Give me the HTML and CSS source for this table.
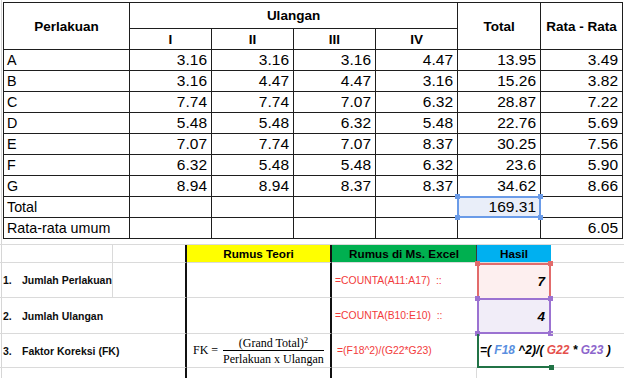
FILE: index.html
```html
<!DOCTYPE html>
<html>
<head>
<meta charset="utf-8">
<link rel="stylesheet" href="styles.css">
</head>
<body>
<div class="top">
  <table class="data">
    <colgroup>
      <col class="c-lbl"><col class="c-num"><col class="c-num"><col class="c-num"><col class="c-num"><col class="c-tot"><col class="c-num">
    </colgroup>
    <thead>
      <tr class="h1"><th rowspan="2">Perlakuan</th><th colspan="4">Ulangan</th><th rowspan="2">Total</th><th rowspan="2">Rata - Rata</th></tr>
      <tr class="h2"><th>I</th><th>II</th><th>III</th><th>IV</th></tr>
    </thead>
    <tbody>
      <tr><td class="lbl">A</td><td>3.16</td><td>3.16</td><td>3.16</td><td>4.47</td><td>13.95</td><td>3.49</td></tr>
      <tr><td class="lbl">B</td><td>3.16</td><td>4.47</td><td>4.47</td><td>3.16</td><td>15.26</td><td>3.82</td></tr>
      <tr><td class="lbl">C</td><td>7.74</td><td>7.74</td><td>7.07</td><td>6.32</td><td>28.87</td><td>7.22</td></tr>
      <tr><td class="lbl">D</td><td>5.48</td><td>5.48</td><td>6.32</td><td>5.48</td><td>22.76</td><td>5.69</td></tr>
      <tr><td class="lbl">E</td><td>7.07</td><td>7.74</td><td>7.07</td><td>8.37</td><td>30.25</td><td>7.56</td></tr>
      <tr><td class="lbl">F</td><td>6.32</td><td>5.48</td><td>5.48</td><td>6.32</td><td>23.6</td><td>5.90</td></tr>
      <tr><td class="lbl">G</td><td>8.94</td><td>8.94</td><td>8.37</td><td>8.37</td><td>34.62</td><td>8.66</td></tr>
      <tr><td class="lbl">Total</td><td></td><td></td><td></td><td></td><td class="sel"><span class="selbox"></span><span class="hd tl"></span><span class="hd tr"></span><span class="hd bl"></span><span class="hd br"></span>169.31</td><td></td></tr>
      <tr><td class="lbl">Rata-rata umum</td><td></td><td></td><td></td><td></td><td></td><td>6.05</td></tr>
    </tbody>
  </table>
</div>

<div class="lower">
  <!-- header row -->
  <div class="cell"></div>
  <div class="cell thick"></div>
  <div class="cell thick hdr yellow">Rumus Teori</div>
  <div class="cell hdr green">Rumus di Ms. Excel</div>
  <div class="cell hdr blue">Hasil</div>
  <div class="cell last"></div>

  <!-- row 1 -->
  <div class="cell label"><span class="no">1.</span>Jumlah Perlakuan</div>
  <div class="cell thick"></div>
  <div class="cell thick"></div>
  <div class="cell excel">=COUNTA(A11:A17)  ::</div>
  <div class="cell res res-red"><span class="hd tl"></span><span class="hd tr"></span>7</div>
  <div class="cell last"></div>

  <!-- row 2 -->
  <div class="cell label span2 thick"><span class="no">2.</span>Jumlah Ulangan</div>
  <div class="cell thick"></div>
  <div class="cell excel">=COUNTA(B10:E10)  ::</div>
  <div class="cell res res-purple"><span class="hd tl"></span><span class="hd tr"></span><span class="hd bl"></span><span class="hd br"></span>4</div>
  <div class="cell last"></div>

  <!-- row 3 -->
  <div class="cell label span2 thick"><span class="no">3.</span>Faktor Koreksi (FK)</div>
  <div class="cell thick theory">
    <span class="fk">FK =</span>
    <span class="frac"><span class="numer">(Grand Total)<sup>2</sup></span><span class="denom">Perlakuan x Ulangan</span></span>
  </div>
  <div class="cell excel excel3">=(F18^2)/(G22*G23)</div>
  <div class="cell res res-green"><span class="hd br"></span><span class="ftext">=( <span class="r-blue">F18</span> ^2)/( <span class="r-red">G22</span> * <span class="r-purple">G23</span> )</span><span class="caret"></span></div>
  <div class="cell last open"></div>

  <!-- row 4 (partial) -->
  <div class="cell span2 thick"></div>
  <div class="cell thick"></div>
  <div class="cell"></div>
  <div class="cell res-tail"></div>
  <div class="cell last"></div>
</div>
</body>
</html>
```

FILE: styles.css
```css
* {
  box-sizing: border-box;
  margin: 0;
  padding: 0;
}

html, body {
  background: #fff;
}

body {
  width: 624px;
  height: 378px;
  overflow: hidden;
  font-family: "Liberation Sans", Arial, sans-serif;
  color: #000;
  background: linear-gradient(#d6d6d6, #d6d6d6) 1px 0 / 1px 100% no-repeat, #fff;
}

/* ---------- top table ---------- */
.top {
  padding: 2px 0 0 3px;
}

.data {
  border-collapse: collapse;
  table-layout: fixed;
  width: 619px;
}

.c-lbl { width: 126px; }
.c-num { width: 82px; }
.c-tot { width: 83px; }

.data th,
.data td {
  border: 1px solid #1e1e1e;
  height: 21px;
  padding: 0 4px 0 3px;
  font-size: 15.5px;
  white-space: nowrap;
  vertical-align: middle;
}

.data th {
  font-weight: bold;
  font-size: 13.5px;
  text-align: center;
  padding: 0;
}

.data .h1 th { height: 26px; }
.data .h2 th { height: 21px; }

.data td {
  text-align: right;
}

.data td.lbl {
  text-align: left;
  padding-left: 3px;
  font-size: 14.3px;
}

.data td.sel {
  position: relative;
  background: #e9eef9;
}

.selbox {
  position: absolute;
  left: -1px;
  top: -1px;
  right: -1px;
  bottom: -1px;
  border: 2px solid #6a9be8;
}

.hd {
  position: absolute;
  width: 5px;
  height: 5px;
  background: #6a9be8;
}

.sel .tl { left: -3px; top: -3px; }
.sel .tr { right: -3px; top: -3px; }
.sel .bl { left: -3px; bottom: -3px; }
.sel .br { right: -3px; bottom: -3px; }

/* ---------- lower grid ---------- */
.lower {
  margin-top: 5px;
  border-top: 1px solid #dadada;
  display: grid;
  grid-template-columns: 113px 74px 145px 145px 74px 1fr;
  grid-template-rows: 18px 35px 36px 34px 12px;
}

.cell {
  position: relative;
  display: flex;
  align-items: center;
  border-right: 1px solid #dadada;
  border-bottom: 1px solid #dadada;
  white-space: nowrap;
}

.cell.thick {
  border-right: 2px solid #111;
}

.cell.last {
  border-right: none;
}

.cell.span2 {
  grid-column: span 2;
}

.hdr {
  justify-content: center;
  font-weight: bold;
  font-size: 11.7px;
}

.yellow { background: #ffff00; }
.green  { background: #00b050; border-right: 1px solid #3a3a3a; }
.blue   { background: #00b0f0; border-right: none; }

.label {
  font-weight: bold;
  font-size: 10.5px;
  padding-left: 3px;
  color: #0d0d0d;
}

.label .no {
  display: inline-block;
  width: 19px;
}

.excel {
  color: #f23b3b;
  font-size: 10.4px;
  padding-left: 3px;
  white-space: pre;
  border-right: none;
}

.excel3 {
  padding-left: 5px;
}

.res {
  justify-content: flex-end;
  font-weight: bold;
  font-style: italic;
  font-size: 13.5px;
  padding-right: 4px;
}

.res-red {
  background: #fdefef;
  border: 2px solid #e26b6b;
  border-bottom: none;
}

.res-red .hd { background: #e26b6b; }
.res-red .tl { left: -4px; top: -4px; }
.res-red .tr { right: -4px; top: -4px; }

.res-purple {
  background: #f1edf8;
  border: 2px solid #9b72d1;
}

.res-purple .hd { background: #9b72d1; }
.res-purple .tl { left: -4px; top: -4px; }
.res-purple .tr { right: -4px; top: -4px; }
.res-purple .bl { left: -4px; bottom: -4px; }
.res-purple .br { right: -4px; bottom: -4px; }

.res-green {
  justify-content: flex-start;
  overflow: visible;
  border-right: none;
  border-left: 2px solid #217346;
  border-bottom: 2px solid #217346;
  padding-left: 1px;
  font-size: 12px;
  z-index: 2;
}

.res-green .hd { background: #217346; }
.res-green .br { right: -3px; bottom: -4px; }

.res-tail {
  border-right: none;
  border-bottom: none;
}

.r-blue { color: #5a8fe0; }
.r-red { color: #e5504c; }
.r-purple { color: #8c66cc; }

.caret {
  display: inline-block;
  width: 1px;
  height: 21px;
  background: #000;
  margin-left: 3px;
}

.open {
  border-bottom: 1px solid #dadada;
}

/* formula in Rumus Teori */
.theory {
  font-family: "Liberation Serif", "DejaVu Serif", serif;
  font-size: 12px;
  padding-left: 6px;
}

.fk {
  margin-right: 5px;
}

.frac {
  display: inline-flex;
  flex-direction: column;
  align-items: center;
  line-height: 14px;
}

.numer sup {
  font-size: 8px;
  line-height: 0;
  vertical-align: 4px;
}

.denom {
  border-top: 1px solid #000;
  padding-top: 1px;
}
```
